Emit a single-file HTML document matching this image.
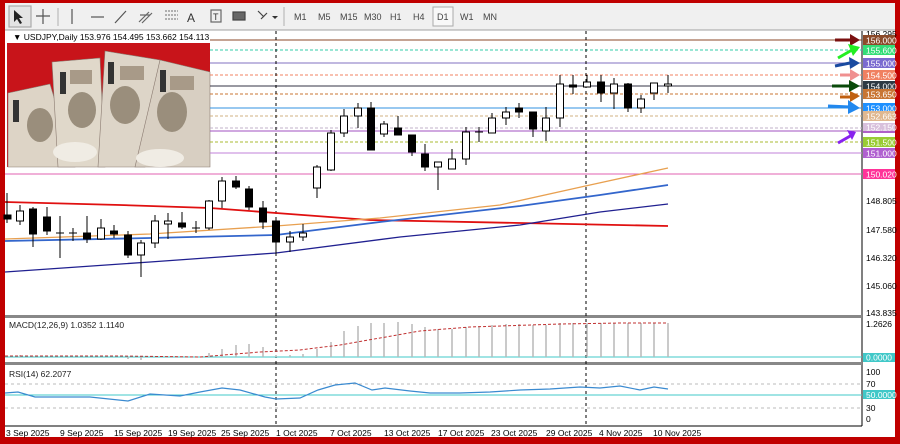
<!DOCTYPE html>
<html><head><meta charset="utf-8"><style>
*{margin:0;padding:0}
body{width:900px;height:444px;overflow:hidden;background:#c00000;font-family:"Liberation Sans",sans-serif}
svg{position:absolute;left:0;top:0}
text{font-family:"Liberation Sans",sans-serif}
</style></head><body>
<svg width="900" height="444" viewBox="0 0 900 444" xmlns="http://www.w3.org/2000/svg">
<rect x="0" y="0" width="900" height="444" fill="#c00000"/>
<rect x="5" y="3" width="890" height="434" fill="#fff"/>
<rect x="5" y="3" width="890" height="27" fill="#f0f0f0"/>
<line x1="5" y1="30" x2="895" y2="30" stroke="#a0a0a0"/>
<g stroke="#555" stroke-width="1.2" fill="none">
<rect x="9" y="6" width="22" height="21" fill="#e4e4e4" stroke="#aaa"/>
<path d="M14 10 L14 22 L17 19 L20 24 L22 23 L19 18 L23 18 Z" fill="#222" stroke="none"/>
<path d="M43 9 V24 M36 16 H50"/>
<line x1="58" y1="8" x2="58" y2="26" stroke="#bbb"/>
<path d="M72 9 V24"/>
<path d="M91 17 H104"/>
<path d="M115 23 L126 11"/>
<path d="M139 22 L149 12 M142 23 L152 13 M140 15 L150 15" stroke="#666"/>
<path d="M165 11 H178 M165 15 H178 M165 19 H178" stroke="#888" stroke-dasharray="2 1"/>
<text x="187" y="22" font-size="12" fill="#333" stroke="none">A</text>
<rect x="211" y="10" width="10" height="12" stroke="#666"/>
<text x="213" y="20" font-size="9" fill="#333" stroke="none">T</text>
<rect x="233" y="12" width="12" height="8" fill="#666" stroke="#444"/>
<path d="M258 11 L264 17 M261 19 L267 13" stroke="#444"/>
<path d="M272 16 L278 16 L275 19 Z" fill="#333" stroke="none"/>
<line x1="284" y1="7" x2="284" y2="26" stroke="#bbb"/>
</g>
<g font-size="9" fill="#444">
<text x="294" y="20">M1</text><text x="318" y="20">M5</text><text x="340" y="20">M15</text><text x="364" y="20">M30</text><text x="390" y="20">H1</text><text x="413" y="20">H4</text>
<rect x="433" y="7" width="20" height="19" fill="#f8f8f8" stroke="#aaa"/>
<text x="437" y="20">D1</text><text x="460" y="20">W1</text><text x="483" y="20">MN</text>
</g>
<line x1="862" y1="31" x2="862" y2="426" stroke="#000"/>
<rect x="5" y="315" width="857" height="3" fill="#888"/>
<rect x="5" y="362" width="857" height="3" fill="#888"/>
<line x1="5" y1="426" x2="862" y2="426" stroke="#000"/>
<!-- image -->
<rect x="7" y="43" width="203" height="124" fill="#c8141a"/>
<g stroke="#8a7a70" stroke-width="0.6">
<polygon points="8,93 50,84 75,167 8,167" fill="#ddd4c6"/>
<polygon points="52,62 100,58 105,167 58,167" fill="#e0d8ca"/>
<polygon points="105,51 160,60 145,167 98,167" fill="#ddd5c8"/>
<polygon points="160,60 210,72 210,167 135,167" fill="#d8cfc2"/>
</g>
<g fill="#9a8e7c">
<ellipse cx="40" cy="125" rx="13" ry="17"/><ellipse cx="82" cy="110" rx="14" ry="18"/>
<ellipse cx="125" cy="105" rx="15" ry="19"/><ellipse cx="172" cy="112" rx="15" ry="20"/>
</g>
<g fill="#a89a88"><rect x="70" y="70" width="22" height="14"/><rect x="120" y="66" width="24" height="14"/><rect x="170" y="76" width="24" height="14"/></g>
<g fill="#f0ece4"><ellipse cx="75" cy="152" rx="22" ry="10"/><ellipse cx="160" cy="158" rx="24" ry="9"/></g>
<g fill="#333"><rect x="13" y="100" width="6" height="22"/><rect x="60" y="72" width="6" height="22"/><rect x="108" y="62" width="6" height="22"/><rect x="160" y="70" width="6" height="22"/></g>
<text x="13" y="40" font-size="8.5" fill="#000">▼ USDJPY,Daily  153.976 154.495 153.662 154.113</text>
<g stroke-width="1">
<line x1="210" y1="40" x2="862" y2="40" stroke="#8b4a2a"/>
<line x1="210" y1="50" x2="862" y2="50" stroke="#33ccaa" stroke-dasharray="3 2"/>
<line x1="210" y1="63" x2="862" y2="63" stroke="#8070c0"/>
<line x1="210" y1="75" x2="862" y2="75" stroke="#f08060" stroke-dasharray="3 2"/>
<line x1="210" y1="86" x2="862" y2="86" stroke="#334"/>
<line x1="210" y1="94" x2="862" y2="94" stroke="#c87533" stroke-dasharray="3 2"/>
<line x1="210" y1="108" x2="862" y2="108" stroke="#3090e0"/>
<line x1="210" y1="116" x2="862" y2="116" stroke="#d0b080" stroke-dasharray="3 2"/>
<line x1="210" y1="128" x2="862" y2="128" stroke="#c0b0c8" stroke-dasharray="3 2"/>
<line x1="210" y1="131" x2="862" y2="131" stroke="#a050c0"/>
<line x1="210" y1="142" x2="862" y2="142" stroke="#aabb33" stroke-dasharray="3 2"/>
<line x1="210" y1="153" x2="862" y2="153" stroke="#c080d8"/>
<line x1="5" y1="174" x2="862" y2="174" stroke="#e060b0"/>
</g>
<line x1="276" y1="31" x2="276" y2="426" stroke="#000" stroke-dasharray="3 3"/>
<line x1="586" y1="31" x2="586" y2="426" stroke="#000" stroke-dasharray="3 3"/>
<g fill="none" stroke-width="1.3">
<polyline points="5,202 120,205 210,208 276,213 370,220 668,226" stroke="#e01010" stroke-width="1.8"/>
<polyline points="5,239 150,234 276,226 380,218 500,205 590,185 668,168" stroke="#e8a050"/>
<polyline points="5,241 150,238 276,235 380,222 520,206 600,195 668,185" stroke="#3366cc" stroke-width="1.8"/>
<polyline points="5,272 150,262 276,253 400,237 520,225 600,212 668,204" stroke="#202090"/>
</g>
<g stroke="#000" stroke-width="1">
<line x1="7" y1="193" x2="7" y2="223"/><rect x="4" y="215" width="7" height="4" fill="#000"/>
<line x1="20" y1="205" x2="20" y2="225"/><rect x="16.5" y="211" width="7" height="10" fill="#fff"/>
<line x1="33" y1="207" x2="33" y2="247"/><rect x="29.5" y="209" width="7" height="25" fill="#000"/>
<line x1="47" y1="207" x2="47" y2="235"/><rect x="43.5" y="217" width="7" height="14" fill="#000"/>
<line x1="60" y1="216" x2="60" y2="258"/><line x1="56" y1="233" x2="64" y2="233"/>
<line x1="73" y1="228" x2="73" y2="241"/><line x1="69" y1="233" x2="77" y2="233"/>
<line x1="87" y1="216" x2="87" y2="243"/><rect x="83.5" y="233" width="7" height="6" fill="#000"/>
<line x1="101" y1="219" x2="101" y2="240"/><rect x="97.5" y="228" width="7" height="11" fill="#fff"/>
<line x1="114" y1="225" x2="114" y2="238"/><rect x="110.5" y="231" width="7" height="3" fill="#000"/>
<line x1="128" y1="231" x2="128" y2="258"/><rect x="124.5" y="235" width="7" height="20" fill="#000"/>
<line x1="141" y1="240" x2="141" y2="277"/><rect x="137.5" y="243" width="7" height="12" fill="#fff"/>
<line x1="155" y1="215" x2="155" y2="248"/><rect x="151.5" y="221" width="7" height="22" fill="#fff"/>
<line x1="168" y1="213" x2="168" y2="239"/><rect x="164.5" y="221" width="7" height="3" fill="#fff"/>
<line x1="182" y1="212" x2="182" y2="229"/><rect x="178.5" y="223" width="7" height="4" fill="#000"/>
<line x1="196" y1="221" x2="196" y2="233"/><line x1="192" y1="228" x2="200" y2="228"/>
<line x1="209" y1="200" x2="209" y2="230"/><rect x="205.5" y="201" width="7" height="27" fill="#fff"/>
<line x1="222" y1="177" x2="222" y2="208"/><rect x="218.5" y="181" width="7" height="20" fill="#fff"/>
<line x1="236" y1="176" x2="236" y2="189"/><rect x="232.5" y="181" width="7" height="6" fill="#000"/>
<line x1="249" y1="186" x2="249" y2="210"/><rect x="245.5" y="189" width="7" height="18" fill="#000"/>
<line x1="263" y1="201" x2="263" y2="229"/><rect x="259.5" y="208" width="7" height="14" fill="#000"/>
<line x1="276" y1="217" x2="276" y2="254"/><rect x="272.5" y="221" width="7" height="21" fill="#000"/>
<line x1="290" y1="231" x2="290" y2="252"/><rect x="286.5" y="237" width="7" height="5" fill="#fff"/>
<line x1="303" y1="224" x2="303" y2="241"/><rect x="299.5" y="233" width="7" height="4" fill="#fff"/>
<line x1="317" y1="165" x2="317" y2="198"/><rect x="313.5" y="167" width="7" height="21" fill="#fff"/>
<line x1="331" y1="130" x2="331" y2="171"/><rect x="327.5" y="133" width="7" height="37" fill="#fff"/>
<line x1="344" y1="109" x2="344" y2="137"/><rect x="340.5" y="116" width="7" height="17" fill="#fff"/>
<line x1="358" y1="103" x2="358" y2="128"/><rect x="354.5" y="108" width="7" height="8" fill="#fff"/>
<line x1="371" y1="102" x2="371" y2="150"/><rect x="367.5" y="108" width="7" height="42" fill="#000"/>
<line x1="384" y1="121" x2="384" y2="137"/><rect x="380.5" y="124" width="7" height="10" fill="#fff"/>
<line x1="398" y1="116" x2="398" y2="135"/><rect x="394.5" y="128" width="7" height="7" fill="#000"/>
<line x1="412" y1="135" x2="412" y2="156"/><rect x="408.5" y="135" width="7" height="17" fill="#000"/>
<line x1="425" y1="144" x2="425" y2="171"/><rect x="421.5" y="154" width="7" height="13" fill="#000"/>
<line x1="438" y1="162" x2="438" y2="190"/><rect x="434.5" y="162" width="7" height="5" fill="#fff"/>
<line x1="452" y1="149" x2="452" y2="169"/><rect x="448.5" y="159" width="7" height="10" fill="#fff"/>
<line x1="466" y1="127" x2="466" y2="165"/><rect x="462.5" y="132" width="7" height="27" fill="#fff"/>
<line x1="479" y1="127" x2="479" y2="142"/><line x1="475" y1="132" x2="483" y2="132"/>
<line x1="492" y1="113" x2="492" y2="133"/><rect x="488.5" y="118" width="7" height="15" fill="#fff"/>
<line x1="506" y1="107" x2="506" y2="125"/><rect x="502.5" y="112" width="7" height="6" fill="#fff"/>
<line x1="519" y1="103" x2="519" y2="118"/><rect x="515.5" y="108" width="7" height="4" fill="#000"/>
<line x1="533" y1="112" x2="533" y2="137"/><rect x="529.5" y="112" width="7" height="17" fill="#000"/>
<line x1="546" y1="107" x2="546" y2="141"/><rect x="542.5" y="118" width="7" height="13" fill="#fff"/>
<line x1="560" y1="75" x2="560" y2="127"/><rect x="556.5" y="84" width="7" height="34" fill="#fff"/>
<line x1="573" y1="75" x2="573" y2="94"/><rect x="569.5" y="85" width="7" height="2" fill="#000"/>
<line x1="587" y1="75" x2="587" y2="87"/><rect x="583.5" y="82" width="7" height="5" fill="#fff"/>
<line x1="601" y1="75" x2="601" y2="102"/><rect x="597.5" y="82" width="7" height="11" fill="#000"/>
<line x1="614" y1="78" x2="614" y2="109"/><rect x="610.5" y="84" width="7" height="9" fill="#fff"/>
<line x1="628" y1="83" x2="628" y2="112"/><rect x="624.5" y="84" width="7" height="24" fill="#000"/>
<line x1="641" y1="95" x2="641" y2="113"/><rect x="637.5" y="99" width="7" height="9" fill="#fff"/>
<line x1="654" y1="83" x2="654" y2="100"/><rect x="650.5" y="83" width="7" height="10" fill="#fff"/>
<line x1="668" y1="75" x2="668" y2="93"/><rect x="664.5" y="84" width="7" height="2" fill="#fff"/>
</g>
<g stroke-width="3" fill="none">
<path d="M835 40 H852" stroke="#7a1010"/><path d="M850 34 L860 40 L850 46 Z" fill="#7a1010" stroke="none"/>
<path d="M838 58 L852 50" stroke="#22ee22"/><path d="M848 44 L860 47 L853 56 Z" fill="#22ee22" stroke="none"/>
<path d="M835 66 L850 63" stroke="#1a4aa0"/><path d="M849 57 L860 63 L850 69 Z" fill="#1a4aa0" stroke="none"/>
<path d="M840 75 H852" stroke="#f09090"/><path d="M850 69 L860 75 L850 81 Z" fill="#f09090" stroke="none"/>
<path d="M832 86 H850" stroke="#0a4a0a"/><path d="M849 80 L860 86 L849 92 Z" fill="#0a4a0a" stroke="none"/>
<path d="M840 97 H852" stroke="#c06010"/><path d="M850 91 L860 96 L850 102 Z" fill="#c06010" stroke="none"/>
<path d="M828 106 L850 107" stroke="#2288ee"/><path d="M848 100 L860 108 L848 114 Z" fill="#2288ee" stroke="none"/>
<path d="M838 143 L852 135" stroke="#8822ee"/><path d="M847 130 L856 132 L852 140 Z" fill="#8822ee" stroke="none"/>
</g>
<line x1="5" y1="357" x2="862" y2="357" stroke="#40c8c8"/>
<g stroke="#b8b8b8" stroke-width="1.5">
<line x1="209" y1="357" x2="209" y2="353"/><line x1="222" y1="357" x2="222" y2="349"/><line x1="236" y1="357" x2="236" y2="345"/><line x1="249" y1="357" x2="249" y2="344"/><line x1="263" y1="357" x2="263" y2="347"/><line x1="276" y1="357" x2="276" y2="355"/><line x1="290" y1="357" x2="290" y2="355"/><line x1="303" y1="357" x2="303" y2="354"/><line x1="317" y1="357" x2="317" y2="349"/><line x1="331" y1="357" x2="331" y2="342"/><line x1="344" y1="357" x2="344" y2="331"/><line x1="358" y1="357" x2="358" y2="326"/><line x1="371" y1="357" x2="371" y2="323"/><line x1="384" y1="357" x2="384" y2="323"/><line x1="398" y1="357" x2="398" y2="322"/><line x1="412" y1="357" x2="412" y2="324"/><line x1="425" y1="357" x2="425" y2="327"/><line x1="438" y1="357" x2="438" y2="329"/><line x1="452" y1="357" x2="452" y2="329"/><line x1="466" y1="357" x2="466" y2="327"/><line x1="479" y1="357" x2="479" y2="326"/><line x1="492" y1="357" x2="492" y2="325"/><line x1="506" y1="357" x2="506" y2="324"/><line x1="519" y1="357" x2="519" y2="324"/><line x1="533" y1="357" x2="533" y2="325"/><line x1="546" y1="357" x2="546" y2="325"/><line x1="560" y1="357" x2="560" y2="323"/><line x1="573" y1="357" x2="573" y2="323"/><line x1="587" y1="357" x2="587" y2="323"/><line x1="601" y1="357" x2="601" y2="323"/><line x1="614" y1="357" x2="614" y2="323"/><line x1="628" y1="357" x2="628" y2="323"/><line x1="641" y1="357" x2="641" y2="323"/><line x1="654" y1="357" x2="654" y2="323"/><line x1="668" y1="357" x2="668" y2="323"/>
<line x1="20" y1="357" x2="20" y2="355"/><line x1="33" y1="357" x2="33" y2="356"/><line x1="128" y1="357" x2="128" y2="359"/><line x1="141" y1="357" x2="141" y2="360"/>
</g>
<polyline points="5,356 120,356 200,357 260,352 300,350 340,345 380,338 420,331 470,327 560,324 620,323 668,323" fill="none" stroke="#c03030" stroke-dasharray="3 2"/>
<text x="9" y="328" font-size="8.5" fill="#222">MACD(12,26,9) 1.0352 1.1140</text>
<line x1="5" y1="384" x2="862" y2="384" stroke="#bbb" stroke-dasharray="3 3"/>
<line x1="5" y1="408" x2="862" y2="408" stroke="#bbb" stroke-dasharray="3 3"/>
<line x1="5" y1="395" x2="862" y2="395" stroke="#40c8c8"/>
<polyline points="5,393 18,392 35,397 60,397 90,397 128,401 150,394 180,396 200,392 222,388 240,390 265,397 276,399 300,398 318,390 335,385 355,383 372,390 385,388 410,391 430,393 460,393 490,392 520,390 550,389 580,387 600,388 620,386 640,390 654,387 668,389" fill="none" stroke="#3a8ad0" stroke-width="1.2"/>
<text x="9" y="377" font-size="8.5" fill="#222">RSI(14) 62.2077</text>
<g font-size="8.5">
<text x="866" y="37" fill="#000">156.295</text>
<rect x="863" y="35" width="32" height="10" fill="#8b4a2a"/><text x="866" y="43.5" fill="#fff">156.000</text>
<rect x="863" y="45" width="32" height="10" fill="#33dd77"/><text x="866" y="53.5" fill="#fff">155.600</text>
<rect x="863" y="58" width="32" height="10" fill="#7a6ad0"/><text x="866" y="66.5" fill="#fff">155.000</text>
<rect x="863" y="70" width="32" height="10" fill="#f08060"/><text x="866" y="78.5" fill="#fff">154.500</text>
<rect x="863" y="81" width="32" height="10" fill="#2e3a44"/><text x="866" y="89.5" fill="#fff">154.000</text>
<rect x="863" y="89" width="32" height="10" fill="#c87533"/><text x="866" y="97.5" fill="#fff">153.650</text>
<rect x="863" y="103" width="32" height="10" fill="#1e90ff"/><text x="866" y="111.5" fill="#fff">153.000</text>
<rect x="863" y="111" width="32" height="10" fill="#e0b890"/><text x="866" y="119.5" fill="#fff">152.663</text>
<rect x="863" y="123" width="32" height="10" fill="#b060c8"/>
<rect x="863" y="123" width="32" height="8" fill="#d8c0dc"/><text x="866" y="130.5" fill="#fff">152.150</text>
<rect x="863" y="137" width="32" height="10" fill="#99cc33"/><text x="866" y="145.5" fill="#fff">151.500</text>
<rect x="863" y="148" width="32" height="10" fill="#b060d0"/><text x="866" y="156.5" fill="#fff">151.000</text>
<rect x="863" y="169" width="32" height="10" fill="#ff3399"/><text x="866" y="177.5" fill="#fff">150.020</text>
<text x="866" y="204" fill="#000">148.805</text>
<text x="866" y="233" fill="#000">147.580</text>
<text x="866" y="261" fill="#000">146.320</text>
<text x="866" y="289" fill="#000">145.060</text>
<text x="866" y="316" fill="#000">143.835</text>
<text x="866" y="327" fill="#000">1.2626</text>
<rect x="863" y="353" width="32" height="9" fill="#40c8c8"/><text x="866" y="360.5" fill="#fff">0.0000</text>
<text x="866" y="375" fill="#000">100</text>
<text x="866" y="387" fill="#000">70</text>
<rect x="863" y="390" width="32" height="9" fill="#40c8c8"/><text x="866" y="398" fill="#fff">50.0000</text>
<text x="866" y="411" fill="#000">30</text>
<text x="866" y="422" fill="#000">0</text>
</g>
<g font-size="8.5" fill="#000">
<text x="6" y="436">3 Sep 2025</text><text x="60" y="436">9 Sep 2025</text><text x="114" y="436">15 Sep 2025</text><text x="168" y="436">19 Sep 2025</text><text x="221" y="436">25 Sep 2025</text><text x="276" y="436">1 Oct 2025</text><text x="330" y="436">7 Oct 2025</text><text x="384" y="436">13 Oct 2025</text><text x="438" y="436">17 Oct 2025</text><text x="491" y="436">23 Oct 2025</text><text x="546" y="436">29 Oct 2025</text><text x="599" y="436">4 Nov 2025</text><text x="653" y="436">10 Nov 2025</text>
</g>
</svg>
</body></html>
